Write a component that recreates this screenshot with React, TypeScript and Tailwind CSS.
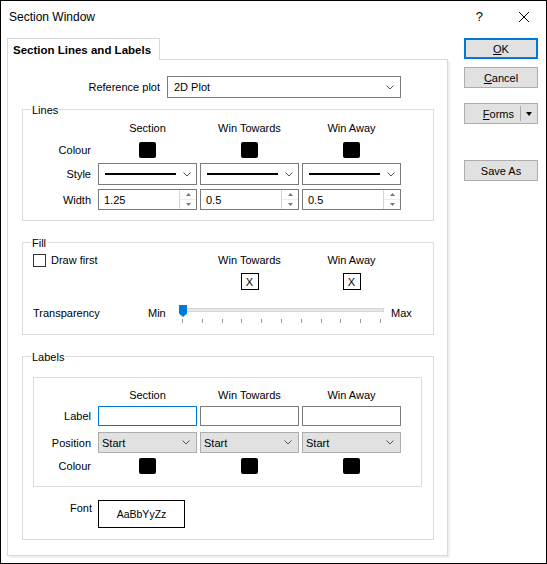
import React from "react";

const Chevron = () => (
  <svg width="8" height="5" viewBox="0 0 8 5" className="shrink-0">
    <path d="M0.5 0.5 L4 4 L7.5 0.5" fill="none" stroke="#555" strokeWidth="1" />
  </svg>
);

const Swatch = () => <div className="w-[17px] h-[16px] bg-black rounded-[2px]" />;

function StyleCombo() {
  return (
    <div className="h-[22px] border border-[#7a7a7a] bg-white flex items-center pl-[6px] pr-[5px]">
      <div className="h-[2px] w-[71px] bg-black" />
      <div className="flex-1" />
      <Chevron />
    </div>
  );
}

function Spin({ value }: { value: string }) {
  return (
    <div className="h-[21px] border border-[#7a7a7a] bg-white flex">
      <div className="flex-1 flex items-center pl-[5px]">{value}</div>
      <div className="w-[17px] border-l border-[#d4d4d4] flex flex-col">
        <div className="flex-1 flex items-center justify-center border-b border-[#ececec]">
          <svg width="5" height="3" viewBox="0 0 5 3">
            <path d="M0 3 L2.5 0 L5 3 Z" fill="#777" />
          </svg>
        </div>
        <div className="flex-1 flex items-center justify-center">
          <svg width="5" height="3" viewBox="0 0 5 3">
            <path d="M0 0 L2.5 3 L5 0 Z" fill="#777" />
          </svg>
        </div>
      </div>
    </div>
  );
}

function PosSelect() {
  return (
    <div className="h-[21px] border border-[#adadad] bg-[#e1e1e1] flex items-center pl-[3px] pr-[6px]">
      <span className="flex-1">Start</span>
      <Chevron />
    </div>
  );
}

function Legend({ children }: { children: React.ReactNode }) {
  return (
    <span className="absolute left-[8px] top-[-7px] leading-[14px] px-[1px] bg-white">{children}</span>
  );
}

function Row({
  label,
  labelW,
  h,
  className = "",
  children,
}: {
  label?: string;
  labelW: string;
  h: string;
  className?: string;
  children: React.ReactNode[];
}) {
  return (
    <div className={`flex gap-[3px] ${h} ${className}`}>
      <div className={`${labelW} text-right pr-[4px] flex items-center justify-end`}>{label}</div>
      {children.map((c, i) => (
        <div key={i} className="w-[99px] flex items-center justify-center">
          {c}
        </div>
      ))}
    </div>
  );
}

function Tick() {
  return <div className="w-px h-[4px] bg-[#9a9a9a]" />;
}

export default function App() {
  return (
    <div className="w-[547px] h-[564px] border border-black bg-white text-black text-[11px] font-['Liberation_Sans',Arial,sans-serif] leading-[14px]">
      {/* Title bar */}
      <div className="h-[31px] flex items-center pl-[8px] pr-[17px]">
        <span className="text-[12px]">Section Window</span>
        <div className="flex-1" />
        <span className="text-[13px] mr-[36px]">?</span>
        <svg width="10" height="10" viewBox="0 0 10 10">
          <path d="M0 0 L10 10 M10 0 L0 10" stroke="#000" strokeWidth="1" />
        </svg>
      </div>

      <div className="flex mt-[6px] ml-[6px]">
        {/* Tab area */}
        <div className="w-[441px] flex flex-col">
          <div className="w-[153px] h-[22px] border border-b-0 border-[#d9d9d9] bg-white relative z-10 mb-[-1px] flex items-center pl-[5px] font-bold text-[11.5px]">
            Section Lines and Labels
          </div>
          <div className="border border-[#d9d9d9] shadow-[2px_2px_0_#f0f0f0] flex flex-col pb-[15px]">
            {/* Reference plot */}
            <div className="flex mt-[16px] h-[22px]">
              <div className="w-[155px] text-right pr-[3px] flex items-center justify-end">Reference plot</div>
              <div className="ml-[4px] w-[234px] border border-[#7a7a7a] bg-white flex items-center pl-[6px] pr-[6px]">
                <span className="flex-1">2D Plot</span>
                <Chevron />
              </div>
            </div>

            {/* Lines */}
            <div className="relative mt-[11px] ml-[14px] w-[412px] border border-[#dcdcdc] pt-[10px] pb-[10px]">
              <Legend>Lines</Legend>
              <Row labelW="w-[72px]" h="h-[16px]">
                {[<span>Section</span>, <span>Win Towards</span>, <span>Win Away</span>]}
              </Row>
              <Row label="Colour" labelW="w-[72px]" h="h-[16px]" className="mt-[6px]">
                {[<Swatch />, <Swatch />, <Swatch />]}
              </Row>
              <div className="flex gap-[3px] h-[22px] mt-[5px]">
                <div className="w-[72px] text-right pr-[4px] flex items-center justify-end">Style</div>
                <div className="w-[99px]"><StyleCombo /></div>
                <div className="w-[99px]"><StyleCombo /></div>
                <div className="w-[99px]"><StyleCombo /></div>
              </div>
              <div className="flex gap-[3px] h-[21px] mt-[4px]">
                <div className="w-[72px] text-right pr-[4px] flex items-center justify-end">Width</div>
                <div className="w-[99px]"><Spin value="1.25" /></div>
                <div className="w-[99px]"><Spin value="0.5" /></div>
                <div className="w-[99px]"><Spin value="0.5" /></div>
              </div>
            </div>

            {/* Fill */}
            <div className="relative mt-[21px] ml-[14px] w-[412px] border border-[#dcdcdc] pt-[9px] pb-[9px]">
              <Legend>Fill</Legend>
              <div className="flex h-[16px]">
                <div className="w-[174px] flex items-center pl-[10px] gap-[5px]">
                  <div className="w-[13px] h-[13px] border border-[#333] bg-white" />
                  <span>Draw first</span>
                </div>
                <div className="ml-[3px] w-[99px] flex items-center justify-center">Win Towards</div>
                <div className="ml-[3px] w-[99px] flex items-center justify-center">Win Away</div>
              </div>
              <div className="flex h-[17px] mt-[5px]">
                <div className="w-[174px]" />
                <div className="ml-[3px] w-[99px] flex justify-center">
                  <div className="w-[18px] h-[17px] border border-black flex items-center justify-center">X</div>
                </div>
                <div className="ml-[3px] w-[99px] flex justify-center">
                  <div className="w-[18px] h-[17px] border border-black flex items-center justify-center">X</div>
                </div>
              </div>
              <div className="flex h-[22px] mt-[13px] items-start">
                <span className="w-[125px] shrink-0 pl-[10px] leading-[20px]">Transparency</span>
                <span className="w-[31px] shrink-0 leading-[20px]">Min</span>
                <div className="w-[207px] shrink-0 flex flex-col">
                  <div className="relative h-[16px]">
                    <div className="absolute left-[3px] top-[5px] w-[202px] h-[4px] bg-[#e7e7e7] border border-[#d6d6d6]" />
                    <svg className="absolute left-0 top-[2px]" width="8" height="12" viewBox="0 0 8 12">
                      <path d="M0 0 H8 V8.5 L4 12 L0 8.5 Z" fill="#0078d7" />
                    </svg>
                  </div>
                  <div className="ml-[3px] w-[199px] flex justify-between">
                    {[0, 1, 2, 3, 4, 5, 6, 7, 8, 9, 10].map((i) => (
                      <Tick key={i} />
                    ))}
                  </div>
                </div>
                <span className="ml-[5px] leading-[20px]">Max</span>
              </div>
            </div>

            {/* Labels */}
            <div className="relative mt-[21px] ml-[14px] w-[412px] border border-[#dcdcdc] pt-[20px] pb-[11px]">
              <Legend>Labels</Legend>
              <div className="ml-[10px] w-[389px] border border-[#dcdcdc] pt-[9px] pb-[12px]">
                <Row labelW="w-[61px]" h="h-[16px]">
                  {[<span>Section</span>, <span>Win Towards</span>, <span>Win Away</span>]}
                </Row>
                <div className="flex gap-[3px] h-[20px] mt-[3px]">
                  <div className="w-[61px] text-right pr-[4px] flex items-center justify-end">Label</div>
                  <div className="w-[99px] border border-[#0078d7] bg-white" />
                  <div className="w-[99px] border border-[#7a7a7a] bg-white" />
                  <div className="w-[99px] border border-[#7a7a7a] bg-white" />
                </div>
                <div className="flex gap-[3px] h-[21px] mt-[6px]">
                  <div className="w-[61px] text-right pr-[4px] flex items-center justify-end">Position</div>
                  <div className="w-[99px]"><PosSelect /></div>
                  <div className="w-[99px]"><PosSelect /></div>
                  <div className="w-[99px]"><PosSelect /></div>
                </div>
                <Row label="Colour" labelW="w-[61px]" h="h-[16px]" className="mt-[5px]">
                  {[<Swatch />, <Swatch />, <Swatch />]}
                </Row>
              </div>
              <div className="flex gap-[3px] mt-[13px]">
                <div className="w-[72px] text-right pr-[3px] leading-[16px]">Font</div>
                <div className="w-[87px] h-[28px] border border-black flex items-center justify-center text-[10.5px]">
                  AaBbYyZz
                </div>
              </div>
            </div>
          </div>
        </div>

        {/* Buttons */}
        <div className="ml-[16px] w-[74px] flex flex-col">
          <div className="h-[21px] border-2 border-[#0078d7] bg-[#e1e1e1] flex items-center justify-center">
            <span><span className="underline">O</span>K</span>
          </div>
          <div className="h-[21px] mt-[8px] border border-[#adadad] bg-[#e1e1e1] flex items-center justify-center">
            <span><span className="underline">C</span>ancel</span>
          </div>
          <div className="h-[21px] mt-[15px] border border-[#adadad] bg-[#e1e1e1] flex items-center justify-end pr-[5px]">
            <span><span className="underline">F</span>orms</span>
            <div className="ml-[6px] w-px h-[15px] bg-[#a8a8a8]" />
            <svg className="ml-[5px]" width="6" height="4" viewBox="0 0 6 4">
              <path d="M0 0 H6 L3 4 Z" fill="#000" />
            </svg>
          </div>
          <div className="h-[21px] mt-[36px] border border-[#adadad] bg-[#e1e1e1] flex items-center justify-center">
            Save As
          </div>
        </div>
      </div>
    </div>
  );
}
